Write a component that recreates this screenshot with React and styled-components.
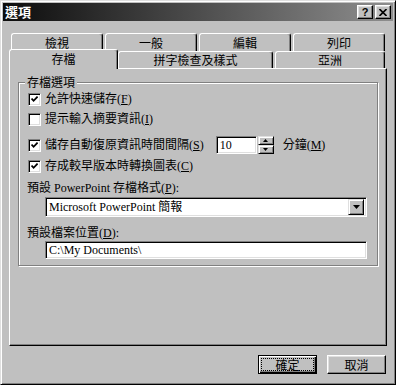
import React from "react";
import styled, { createGlobalStyle } from "styled-components";

const GlobalStyle = createGlobalStyle`
  html, body {
    margin: 0;
    padding: 0;
    background: #c0c0c0;
  }
  body {
    font-family: "Liberation Serif", "Noto Sans CJK TC", serif;
    font-size: 12px;
    color: #000;
  }
`;

const Window = styled.div`
  box-sizing: border-box;
  width: 396px;
  height: 385px;
  background: #c0c0c0;
  border: 1px solid;
  border-color: #dfdfdf #000 #000 #dfdfdf;
  box-shadow: inset 1px 1px #fff, inset -1px -1px #808080;
  padding: 2px;
  display: flex;
  flex-direction: column;
`;

const TitleBar = styled.div`
  height: 18px;
  flex: 0 0 18px;
  display: flex;
  align-items: center;
  padding: 0 2px 0 2px;
  background: linear-gradient(to right, #0c0c0c, #8e8e8e);
`;

const Title = styled.div`
  flex: 1;
  color: #fff;
  font-family: "Noto Sans CJK TC", sans-serif;
  font-weight: bold;
  font-size: 13px;
  line-height: 18px;
`;

const TitleButton = styled.div`
  box-sizing: border-box;
  width: 16px;
  height: 14px;
  margin-left: ${(p) => (p.$gap ? 2 : 0)}px;
  background: #c0c0c0;
  border: 1px solid;
  border-color: #fff #000 #000 #fff;
  box-shadow: inset -1px -1px #808080, inset 1px 1px #dfdfdf;
  display: flex;
  align-items: center;
  justify-content: center;
  font-family: "Liberation Sans", sans-serif;
  font-weight: bold;
  font-size: 11px;
  line-height: 12px;
`;

const Body = styled.div`
  flex: 1;
  display: flex;
  flex-direction: column;
  padding: 12px 6px 0;
`;

const TabRow = styled.div`
  display: flex;
  align-items: flex-end;
  gap: 2px;
  height: ${(p) => p.$h}px;
  padding: 0 2px;
`;

const Tab = styled.div`
  box-sizing: border-box;
  flex: ${(p) => (p.$w ? `0 0 ${p.$w}px` : "1 1 0")};
  height: ${(p) => (p.$active ? 20 : p.$h)}px;
  margin: ${(p) => (p.$active ? "0 -2px -1px" : "0")};
  position: ${(p) => (p.$active ? "relative" : "static")};
  z-index: ${(p) => (p.$active ? 2 : "auto")};
  background: #c0c0c0;
  border-left: 1px solid #fff;
  border-top: 1px solid #fff;
  border-right: 1px solid #000;
  border-radius: 3px 3px 0 0;
  box-shadow: inset -1px 0 #808080;
  display: flex;
  align-items: ${(p) => (p.$active ? "flex-start" : "center")};
  padding-top: ${(p) => (p.$active ? 1 : 0)}px;
  justify-content: center;
  font-family: "Noto Sans CJK TC", sans-serif;
  font-size: 12px;
  line-height: 16px;
`;

const Panel = styled.div`
  box-sizing: border-box;
  height: 278px;
  border: 1px solid;
  border-color: #fff #000 #000 #fff;
  box-shadow: inset -1px -1px #808080;
  padding: 13px 8px 0;
`;

const GroupBox = styled.div`
  box-sizing: border-box;
  position: relative;
  height: 184px;
  border: 1px solid #808080;
  box-shadow: inset 1px 1px #fff, 1px 1px #fff;
  padding: 8px 0 0 9px;
  display: flex;
  flex-direction: column;
`;

const GroupLabel = styled.div`
  position: absolute;
  top: -9px;
  left: 6px;
  padding: 0 2px;
  background: #c0c0c0;
  font-family: "Noto Sans CJK TC", sans-serif;
  line-height: 16px;
`;

const Row = styled.div`
  display: flex;
  align-items: center;
  height: ${(p) => p.$h || 16}px;
  margin-top: ${(p) => p.$mt || 0}px;
  margin-left: ${(p) => p.$ml || 0}px;
  line-height: 16px;
  white-space: nowrap;
`;

const CheckBox = styled.div`
  box-sizing: border-box;
  flex: 0 0 13px;
  width: 13px;
  height: 13px;
  background: #fff;
  border: 1px solid;
  border-color: #808080 #fff #fff #808080;
  box-shadow: inset 1px 1px #000, inset -1px -1px #dfdfdf;
  display: flex;
  align-items: center;
  justify-content: center;
`;

const CheckLabel = styled.span`
  margin-left: 4px;
`;

const U = styled.span`
  text-decoration: underline;
`;

const Field = styled.div`
  box-sizing: border-box;
  width: ${(p) => p.$w}px;
  height: ${(p) => p.$h}px;
  margin-left: ${(p) => p.$ml || 0}px;
  background: #fff;
  border: 1px solid;
  border-color: #808080 #fff #fff #808080;
  box-shadow: inset 1px 1px #000, inset -1px -1px #dfdfdf;
  display: flex;
  align-items: center;
  padding: 0 2px 0 3px;
  font-family: "Liberation Serif", "Noto Sans CJK TC", serif;
  font-size: 12px;
`;

const FieldText = styled.span`
  flex: 1;
`;

const RaisedBox = styled.div`
  box-sizing: border-box;
  width: ${(p) => p.$w}px;
  height: ${(p) => p.$h}px;
  background: #c0c0c0;
  border: 1px solid;
  border-color: #dfdfdf #000 #000 #dfdfdf;
  box-shadow: inset 1px 1px #fff, inset -1px -1px #808080;
  display: flex;
  align-items: center;
  justify-content: center;
`;

const SpinButtons = styled.div`
  display: flex;
  flex-direction: column;
  margin-left: 1px;
`;

const Buttons = styled.div`
  display: flex;
  justify-content: flex-end;
  gap: 10px;
  margin-top: 9px;
  margin-right: 1px;
`;

const Button = styled.div`
  box-sizing: border-box;
  width: 59px;
  height: 19px;
  padding: 2px;
  background: #c0c0c0;
  border: 1px solid;
  border-color: ${(p) => (p.$default ? "#000" : "#fff #000 #000 #fff")};
  box-shadow: ${(p) =>
    p.$default
      ? "inset 1px 1px #fff, inset -1px -1px #000, inset -2px -2px #808080"
      : "inset -1px -1px #808080, inset 1px 1px #dfdfdf"};
  display: flex;
  font-family: "Noto Sans CJK TC", sans-serif;
  font-size: 12px;
`;

const ButtonFace = styled.div`
  box-sizing: border-box;
  flex: 1;
  display: flex;
  align-items: center;
  justify-content: center;
  line-height: 13px;
  border: 1px dotted ${(p) => (p.$focus ? "#000" : "transparent")};
`;

const Down = () => (
  <svg width="7" height="4" viewBox="0 0 7 4">
    <polygon points="0,0 7,0 3.5,4" fill="#000" />
  </svg>
);

const Up = () => (
  <svg width="5" height="3" viewBox="0 0 5 3">
    <polygon points="0,3 5,3 2.5,0" fill="#000" />
  </svg>
);

const SmallDown = () => (
  <svg width="5" height="3" viewBox="0 0 5 3">
    <polygon points="0,0 5,0 2.5,3" fill="#000" />
  </svg>
);

function Check({ on }) {
  return (
    <CheckBox>
      {on && (
        <svg width="7" height="7" viewBox="0 0 7 7">
          <path d="M0.5 2.5 L2.6 4.8 L6.6 0.6" fill="none" stroke="#000" strokeWidth="1.8" />
        </svg>
      )}
    </CheckBox>
  );
}

export default function App() {
  return (
    <>
      <GlobalStyle />
      <Window>
        <TitleBar>
          <Title>選項</Title>
          <TitleButton>?</TitleButton>
          <TitleButton $gap>
            <svg width="8" height="7" viewBox="0 0 8 7">
              <path d="M0.5 0 L7.5 7 M7.5 0 L0.5 7" stroke="#000" strokeWidth="1.6" />
            </svg>
          </TitleButton>
        </TitleBar>

        <Body>
          <TabRow $h={18}>
            <Tab $h={18}>檢視</Tab>
            <Tab $h={18}>一般</Tab>
            <Tab $h={18}>編輯</Tab>
            <Tab $h={18}>列印</Tab>
          </TabRow>
          <TabRow $h={17}>
            <Tab $h={17} $w={109} $active>
              存檔
            </Tab>
            <Tab $h={17} $w={155}>
              拼字檢查及樣式
            </Tab>
            <Tab $h={17}>亞洲</Tab>
          </TabRow>

          <Panel>
            <GroupBox>
              <GroupLabel>存檔選項</GroupLabel>
              <Row>
                <Check on />
                <CheckLabel>
                  允許快速儲存(<U>F</U>)
                </CheckLabel>
              </Row>
              <Row $mt={4}>
                <Check />
                <CheckLabel>
                  提示輸入摘要資訊(<U>I</U>)
                </CheckLabel>
              </Row>
              <Row $mt={9} $h={18}>
                <Check on />
                <CheckLabel>
                  儲存自動復原資訊時間間隔(<U>S</U>)
                </CheckLabel>
                <Field $w={41} $h={18} $ml={12}>
                  <FieldText>10</FieldText>
                </Field>
                <SpinButtons>
                  <RaisedBox $w={16} $h={9}>
                    <Up />
                  </RaisedBox>
                  <RaisedBox $w={16} $h={9}>
                    <SmallDown />
                  </RaisedBox>
                </SpinButtons>
                <CheckLabel style={{ marginLeft: 9 }}>
                  分鐘(<U>M</U>)
                </CheckLabel>
              </Row>
              <Row $mt={4}>
                <Check on />
                <CheckLabel>
                  存成較早版本時轉換圖表(<U>C</U>)
                </CheckLabel>
              </Row>
              <Row $mt={6} $ml={-1}>
                預設 PowerPoint 存檔格式(<U>P</U>):
              </Row>
              <Row $mt={1} $h={20} $ml={17}>
                <Field $w={322} $h={20}>
                  <FieldText>Microsoft PowerPoint 簡報</FieldText>
                  <RaisedBox $w={16} $h={16}>
                    <Down />
                  </RaisedBox>
                </Field>
              </Row>
              <Row $mt={8} $ml={-1}>
                預設檔案位置(<U>D</U>):
              </Row>
              <Row $h={18} $ml={17}>
                <Field $w={322} $h={18}>
                  <FieldText>C:\My Documents\</FieldText>
                </Field>
              </Row>
            </GroupBox>
          </Panel>

          <Buttons>
            <Button $default>
              <ButtonFace $focus>確定</ButtonFace>
            </Button>
            <Button>
              <ButtonFace>取消</ButtonFace>
            </Button>
          </Buttons>
        </Body>
      </Window>
    </>
  );
}
